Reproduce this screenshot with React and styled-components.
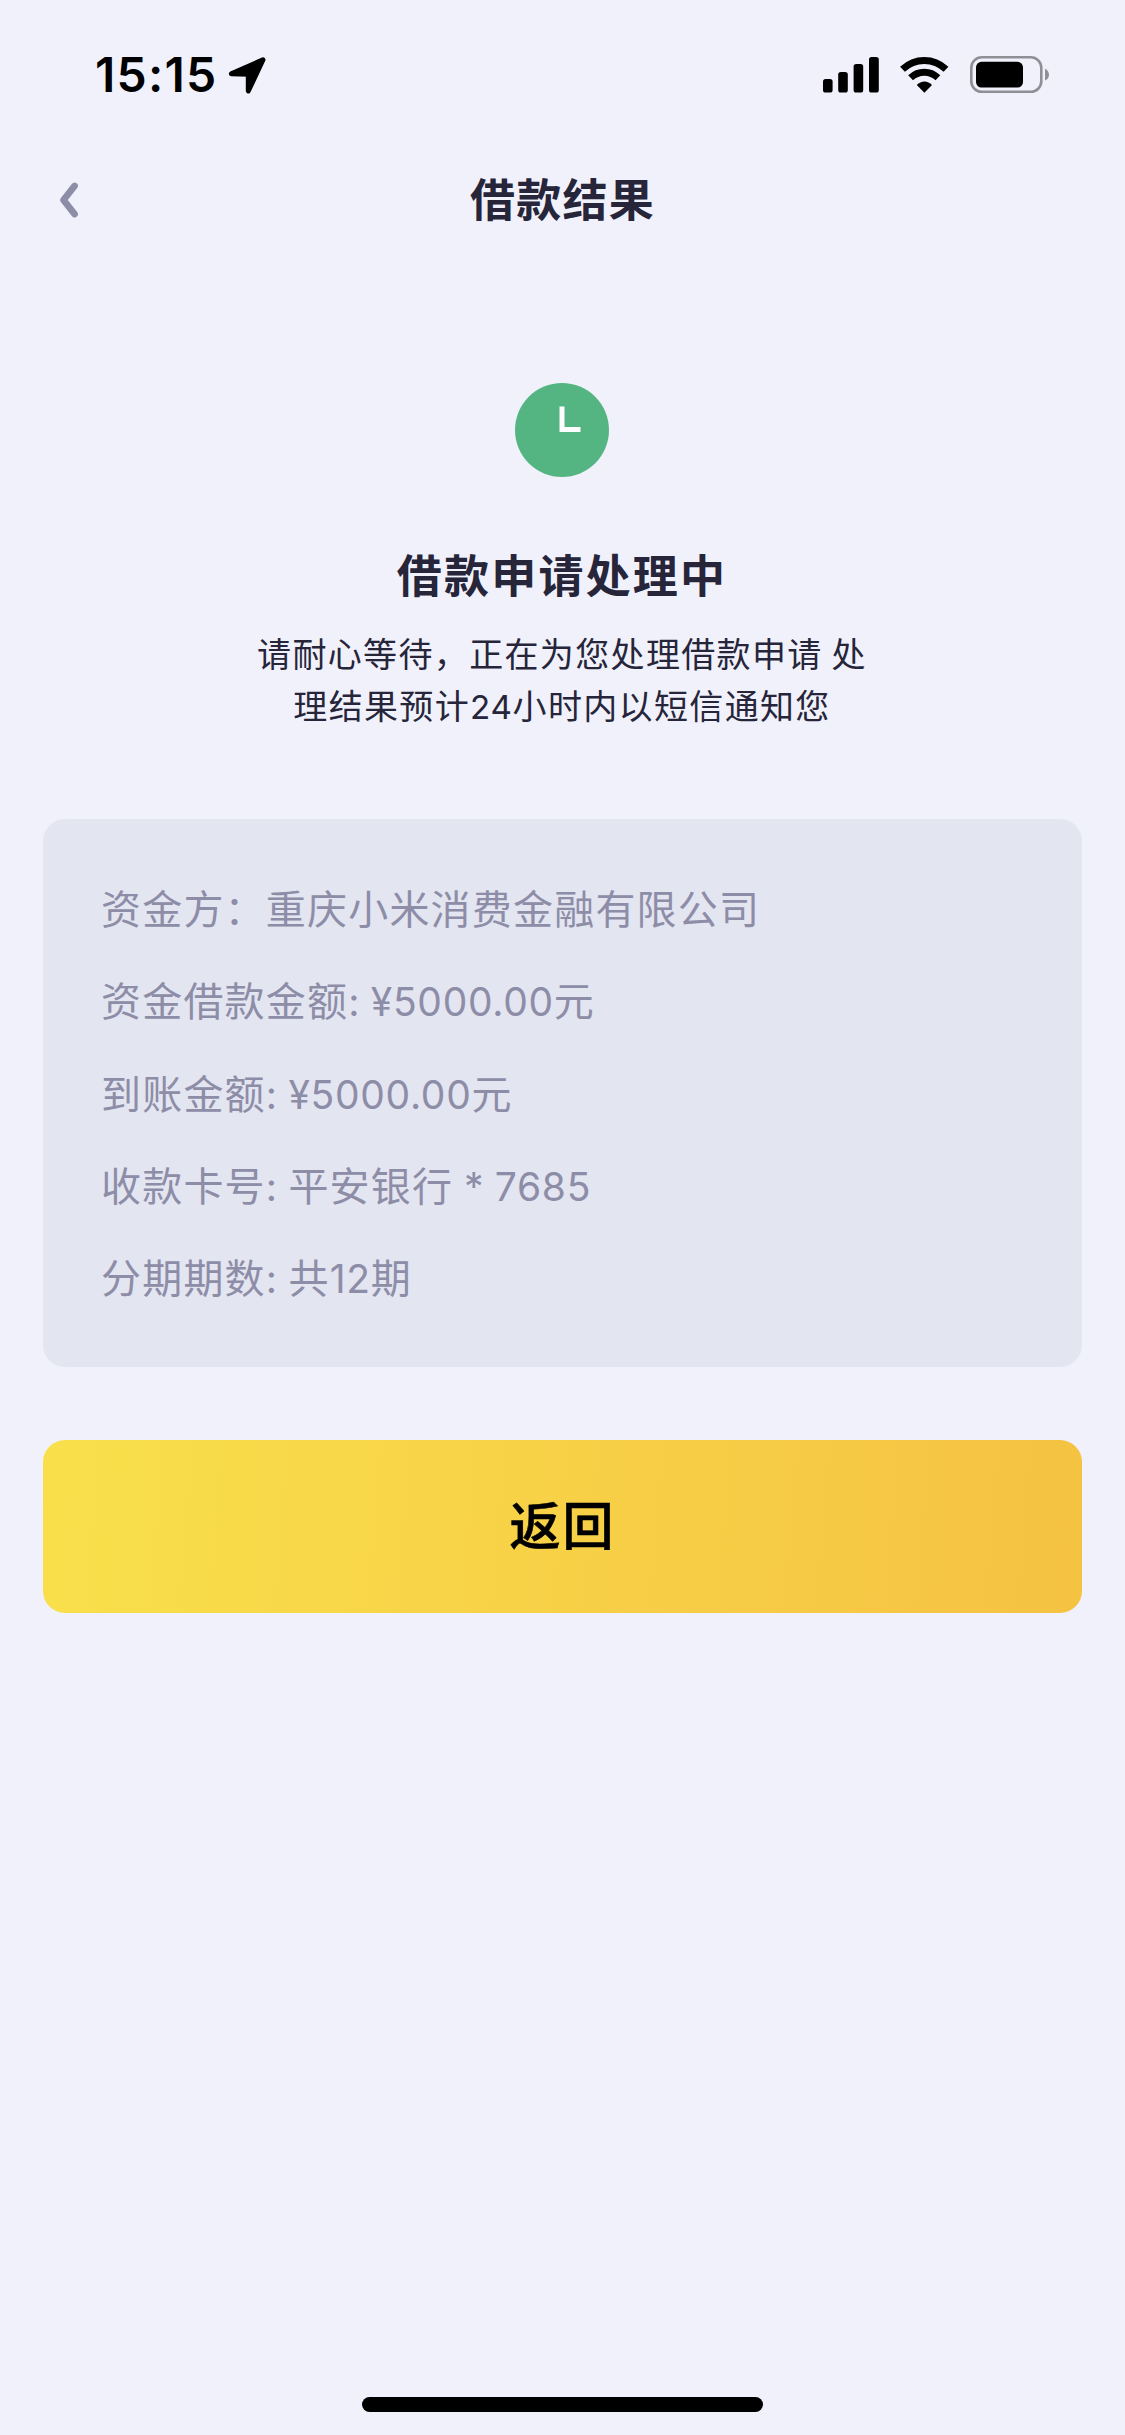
import React from "react";
import styled, { createGlobalStyle } from "styled-components";

const details = [
  [{ text: "资金方：重庆小米消费金融有限公司" }],
  [{ text: "资金借款金额" }, { latin: true, text: ": ¥5000.00" }, { text: "元" }],
  [{ text: "到账金额" }, { latin: true, text: ": ¥5000.00" }, { text: "元" }],
  [{ text: "收款卡号" }, { latin: true, text: ": " }, { text: "平安银行" }, { latin: true, text: " * 7685" }],
  [{ text: "分期期数" }, { latin: true, text: ": " }, { text: "共" }, { latin: true, text: "12" }, { text: "期" }],
];

const StatusIcons = () => (
  <svg width="228" height="40" viewBox="0 0 228 40">
    <rect x="1" y="24" width="9.6" height="13.5" rx="2.6" />
    <rect x="16.2" y="17" width="9.6" height="20.5" rx="2.6" />
    <rect x="31.6" y="9" width="9.6" height="28.5" rx="2.6" />
    <rect x="47" y="2" width="9.8" height="35.5" rx="2.6" />
    <g fill="none" stroke="#000" strokeWidth="7">
      <path d="M80.500 14.2C93 2.500 111.500 2.500 124 14.200" />
      <path d="M88.600 22.800C96.500 15.400 108 15.400 115.900 22.800" />
    </g>
    <path d="M94.800 30C99 25.300 105.800 25.300 110 30L102.400 37.800Z" />
    <rect x="149.300" y="2.300" width="70" height="34.500" rx="10.500" fill="none" stroke="#8f8f96" strokeWidth="2.600" />
    <rect x="154" y="6.800" width="47" height="25.700" rx="5.500" />
    <path d="M223 13.700C228.300 16 228.300 23.500 223 25.500Z" fill="#8f8f96" />
  </svg>
);

const App = () => {
  return (
    <Page>
      <GlobalStyle />
      <StatusBar>
        <Time>
          15:15
          <svg width="40" height="40" viewBox="0 0 40 40">
            <path
              d="M3.300 18.800L35 4.800L20.300 36V19.200Z"
              stroke="#000"
              strokeWidth="5"
              strokeLinejoin="round"
            />
          </svg>
        </Time>
        <StatusIcons />
      </StatusBar>
      <NavBar>
        <BackButton aria-label="返回">
          <svg width="22" height="38" viewBox="0 0 22 38">
            <path d="M16.500 5L5.500 19L16.500 33" />
          </svg>
        </BackButton>
        <NavTitle>借款结果</NavTitle>
      </NavBar>
      <Result>
        <svg width="94" height="94" viewBox="0 0 94 94">
          <circle cx="47" cy="47" r="47" fill="#54b583" />
          <path d="M47 23.500V46.500H65.500" fill="none" stroke="#fff" strokeWidth="5" />
        </svg>
        <h1>借款申请处理中</h1>
        <p>
          请耐心等待，正在为您处理借款申请 处
          <br />
          理结果预计<Latin>24</Latin>小时内以短信通知您
        </p>
      </Result>
      <Card>
        {details.map((row, index) => (
          <Row key={index}>
            {row.map((part, i) => (part.latin ? <Latin key={i}>{part.text}</Latin> : part.text))}
          </Row>
        ))}
      </Card>
      <ReturnButton>返回</ReturnButton>
      <HomeIndicator />
    </Page>
  );
};

const GlobalStyle = createGlobalStyle`
  * {
    box-sizing: border-box;
  }
  body {
    margin: 0;
    background: #f0f1fb;
  }
`;
const Page = styled.div`
  display: flex;
  flex-direction: column;
  width: 1125px;
  height: 2435px;
  overflow: hidden;
  background: #f0f1fb;
  color: #26253a;
  font-family: "Noto Sans CJK SC", sans-serif;
  svg {
    display: block;
    flex: none;
  }
`;
const StatusBar = styled.div`
  display: flex;
  justify-content: space-between;
  align-items: flex-start;
  height: 132px;
  padding: 55px 75px 0 95px;
`;
const Time = styled.div`
  display: flex;
  gap: 11px;
  color: #000;
  font-family: Inter, sans-serif;
  font-size: 48px;
  font-weight: 600;
  line-height: 40px;
  letter-spacing: 1.2px;
`;
const NavBar = styled.header`
  display: grid;
  grid-template-columns: 120px 1fr 120px;
  align-items: center;
  height: 135px;
`;
const BackButton = styled.button`
  width: 80px;
  padding: 0 0 0 58px;
  border: none;
  background: none;
  path {
    fill: none;
    stroke: #8e8da8;
    stroke-width: 6.8;
    stroke-linecap: round;
    stroke-linejoin: round;
  }
`;
const NavTitle = styled.div`
  padding-bottom: 3px;
  font-size: 45px;
  font-weight: 600;
  line-height: 60px;
  letter-spacing: 1.2px;
  text-align: center;
`;
const Result = styled.section`
  display: flex;
  flex-direction: column;
  align-items: center;
  height: 552px;
  padding: 116px 1px 0 0;
  text-align: center;
  h1 {
    margin: 62px 0 0;
    font-size: 45px;
    font-weight: 600;
    line-height: 70px;
    letter-spacing: 2.2px;
  }
  p {
    margin: 18px 0 0;
    font-size: 34px;
    line-height: 52px;
    letter-spacing: 1.35px;
    white-space: nowrap;
  }
`;
const Card = styled.section`
  height: 548px;
  margin: 0 43px;
  padding: 42px 58px;
  border-radius: 22px;
  background: #e3e5f1;
  color: #8e8da8;
`;
const Row = styled.div`
  height: 92.3px;
  font-size: 40px;
  line-height: 92.3px;
  letter-spacing: 1.2px;
  white-space: pre;
`;
const Latin = styled.span`
  font-family: Inter, sans-serif;
  font-size: 0.975em;
  letter-spacing: 0.7px;
  word-spacing: -1px;
`;
const ReturnButton = styled.button`
  height: 173px;
  margin: 73px 43px 0;
  padding: 0 0 8px;
  border: none;
  border-radius: 22px;
  background: linear-gradient(95deg, #f9e04b 0%, #f7cf46 55%, #f5c242 100%);
  color: #000;
  font-family: inherit;
  font-size: 51px;
  font-weight: 500;
  letter-spacing: 2px;
  -webkit-text-stroke: 0.6px #000;
`;
const HomeIndicator = styled.div`
  align-self: center;
  width: 401px;
  height: 15px;
  margin: auto 0 23px;
  border-radius: 8px;
  background: #000;
`;

export default App;
